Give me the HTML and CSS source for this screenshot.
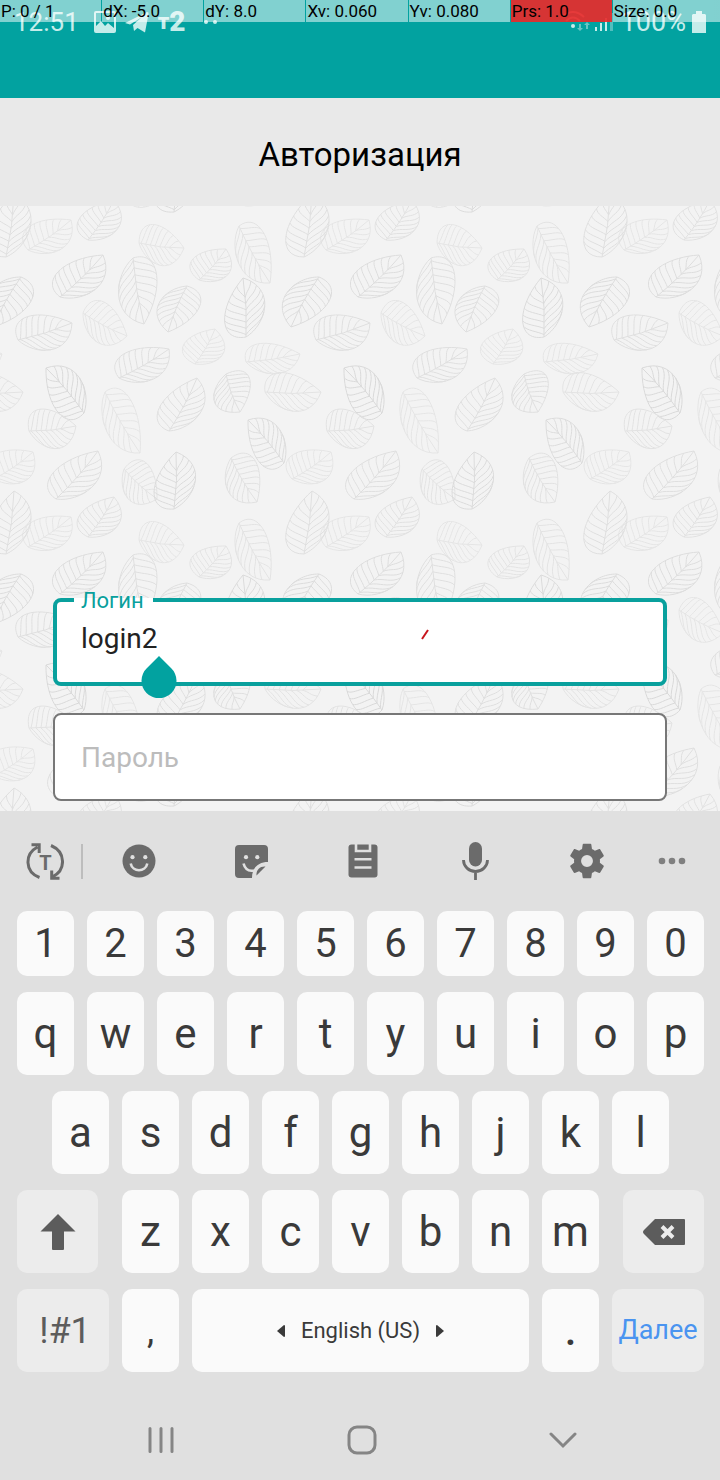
FILE: index.html
```html
<!DOCTYPE html>
<html lang="ru">
<head>
<meta charset="utf-8">
<meta name="viewport" content="width=device-width, initial-scale=1">
<title>Авторизация</title>
<link rel="stylesheet" href="styles.css">
</head>
<body>
<div class="pointer-bar">
  <span>P: 0 / 1</span><span>dX: -5.0</span><span>dY: 8.0</span><span>Xv: 0.060</span><span>Yv: 0.080</span><span class="pressed">Prs: 1.0</span><span>Size: 0.0</span>
</div>
<div class="status-bar">
  <div class="status-group">
    <span class="clock">12:51</span>
    <svg class="st-picture" width="22" height="22" viewBox="0 0 22 22"><path fill-rule="evenodd" d="M2 0H20a2 2 0 0 1 2 2V20a2 2 0 0 1-2 2H2a2 2 0 0 1-2-2V2a2 2 0 0 1 2-2ZM2 2V15L7 10L11 15L14 12L20 17V2ZM14 5a2 2 0 1 1 0 4a2 2 0 0 1 0-4Z"/></svg>
    <svg width="24" height="21" viewBox="0 0 24 21"><path d="M0 11L22 0Q24 0 23.500 2L20 20.500L12.500 16L9 19L8 13L17 5L5 12.500Z"/></svg>
    <span class="carrier"><span>т</span><b>2</b></span>
    <svg class="st-dots" width="16" height="6" viewBox="0 0 16 6"><circle cx="3" cy="3" r="2"/><circle cx="12" cy="3" r="2"/></svg>
  </div>
  <div class="status-group end">
    <svg class="st-signal" width="51" height="22" viewBox="0 0 51 22"><g fill="none" stroke="currentColor" stroke-width="2"><path d="M0 6Q11-4 22 6M4 10Q11 3 18 10"/></g><circle cx="11" cy="15" r="2"/><path opacity=".5" d="M17 13h2v4h2l-3 3-3-3h2zM24 18h2v-4h2l-3-3-3 3h2z"/><path d="M33 16h2v4h-2zM38 12h2v8h-2zM43 7h2v13h-2z"/><path opacity=".4" d="M48 2h3v18h-3z"/></svg>
    <span class="battery-text">100%</span>
    <svg width="14" height="22" viewBox="0 0 14 22"><path d="M4 0h6v3h3l1 1v18H0V4l1-1h3z"/></svg>
  </div>
</div>
<header class="title-bar"><h1>Авторизация</h1></header>
<main class="content">
  <svg class="leaves" width="100%" height="100%" aria-hidden="true">
    <defs>
      <pattern id="leaf-tile" width="298" height="297" patternUnits="userSpaceOnUse"></pattern>
    </defs>
    <rect width="100%" height="100%" fill="url(#leaf-tile)"/>
  </svg>
  <form class="login-form">
    <div class="field active">
      <label for="login">Логин</label>
      <input id="login" type="text" value="login2">
      <svg class="caret-handle" width="36" height="42" viewBox="0 0 36 42"><path d="M18 0L30 12A17.500 17.500 0 1 1 6 12Z"/></svg>
      <svg class="trail" width="8" height="11" viewBox="0 0 8 11"><path d="M1 10L7 1"/></svg>
    </div>
    <div class="field">
      <input id="password" type="password" placeholder="Пароль" aria-label="Пароль">
    </div>
  </form>
</main>
<section class="keyboard" aria-label="Клавиатура">
  <div class="tools">
    <button type="button" class="split" aria-label="Text"><svg width="38" height="38" viewBox="0 0 38 38"><g fill="none" stroke="currentColor" stroke-width="3"><path d="M13.500 35.500C-1.500 30-1.500 12 11.500 5M5.500 2.700H13.200V11M25 3.500C40 10 40 28 27 34.500M33.500 36.200H25.700V28.500"/></g><text x="19.500" y="28" text-anchor="middle">T</text></svg></button>
    <button type="button" aria-label="Emoji"><svg width="34" height="34" viewBox="0 0 34 34"><circle cx="17" cy="17" r="16.500"/><g class="cut"><circle cx="10.500" cy="13.200" r="2.100"/><circle cx="23.300" cy="13.200" r="2.100"/></g><path class="cut-line" d="M8.700 19.500C10.500 28.500 23.500 28.500 25.300 19.500"/></svg></button>
    <button type="button" aria-label="Stickers"><svg width="33" height="33" viewBox="0 0 33 33"><path d="M4 0H29a4 4 0 0 1 4 4V17C23 17 17 23 17 33H4a4 4 0 0 1-4-4V4a4 4 0 0 1 4-4ZM30.500 21.500L21.500 30.500C21 25 25 21 30.500 21.500Z"/><g class="cut"><circle cx="11" cy="12.200" r="2.100"/><circle cx="22.300" cy="12.200" r="2.100"/></g><path class="cut-line" d="M8.500 18.500C10 24 14 26.500 19 25.500"/></svg></button>
    <button type="button" aria-label="Clipboard"><svg width="30" height="34" viewBox="0 0 30 34"><rect width="29" height="33" x=".5" y=".5" rx="3"/><path class="cut-line" d="M8 0V7H22V0M6.500 15.200H23.500M6.500 23.500H23.500"/></svg></button>
    <button type="button" aria-label="Voice"><svg width="29" height="40" viewBox="0 0 29 40"><rect x="8" y="1" width="13" height="24.500" rx="6.500"/><path fill="none" stroke="currentColor" stroke-width="2.800" d="M2.500 19A12 11.500 0 0 0 26.500 19M14.500 30V39"/></svg></button>
    <button type="button" aria-label="Settings"><svg width="36" height="36" viewBox="2 2 20 20"><path d="M19.140 12.940c.04-.3.060-.61.060-.94 0-.32-.02-.64-.07-.94l2.030-1.580c.18-.14.230-.41.120-.61l-1.920-3.320c-.12-.22-.37-.29-.59-.22l-2.390.96c-.5-.38-1.030-.7-1.620-.94l-.36-2.540c-.04-.24-.24-.41-.48-.41h-3.840c-.24 0-.43.170-.47.410l-.36 2.540c-.59.240-1.130.570-1.620.940l-2.390-.96c-.22-.08-.47 0-.59.220L2.740 8.870c-.12.210-.08.470.120.610l2.030 1.580c-.05.300-.09.630-.09.940s.02.640.070.940l-2.030 1.580c-.18.140-.23.410-.12.610l1.920 3.320c.12.220.370.290.590.220l2.390-.96c.5.380 1.030.7 1.620.940l.36 2.540c.05.240.240.410.480.410h3.840c.24 0 .44-.17.470-.41l.36-2.540c.59-.24 1.130-.56 1.620-.94l2.390.960c.22.080.470 0 .590-.22l1.920-3.320c.12-.22.070-.47-.12-.61l-2.010-1.580zM12 15.300a3.300 3.300 0 1 1 0-6.600a3.300 3.300 0 0 1 0 6.600z"/></svg></button>
    <button type="button" class="more" aria-label="More"><svg width="28" height="8" viewBox="0 0 28 8"><circle cx="4" cy="4" r="3.300"/><circle cx="14" cy="4" r="3.300"/><circle cx="24" cy="4" r="3.300"/></svg></button>
  </div>
  <div class="keys">
    <div class="row digits"><button type="button">1</button><button type="button">2</button><button type="button">3</button><button type="button">4</button><button type="button">5</button><button type="button">6</button><button type="button">7</button><button type="button">8</button><button type="button">9</button><button type="button">0</button></div>
    <div class="row"><button type="button">q</button><button type="button">w</button><button type="button">e</button><button type="button">r</button><button type="button">t</button><button type="button">y</button><button type="button">u</button><button type="button">i</button><button type="button">o</button><button type="button">p</button></div>
    <div class="row inset"><button type="button">a</button><button type="button">s</button><button type="button">d</button><button type="button">f</button><button type="button">g</button><button type="button">h</button><button type="button">j</button><button type="button">k</button><button type="button">l</button></div>
    <div class="row"><button type="button" class="fn shift" aria-label="Shift"><svg width="36" height="36" viewBox="0 0 36 36"><path d="M18 0L35.500 17.500H24V35a1 1 0 0 1-1 1H13a1 1 0 0 1-1-1V17.500H.5Z"/></svg></button><button type="button">z</button><button type="button">x</button><button type="button">c</button><button type="button">v</button><button type="button">b</button><button type="button">n</button><button type="button">m</button><button type="button" class="fn erase" aria-label="Backspace"><svg width="42" height="26" viewBox="0 0 42 26"><path d="M12 0H41a1 1 0 0 1 1 1V25a1 1 0 0 1-1 1H12L1 15Q-1 13 1 11Z"/><path stroke="#ececec" stroke-width="4" d="M19 7.500L30 18.500M30 7.500L19 18.500"/></svg></button></div>
    <div class="row"><button type="button" class="fn wide symbols">!#1</button><button type="button" class="comma">,</button><button type="button" class="space"><svg width="8" height="12" viewBox="0 0 8 12"><path d="M8 1V11Q8 12 7 12L0 6L7 0Q8 0 8 1Z"/></svg>English (US)<svg width="8" height="12" viewBox="0 0 8 12"><path d="M0 1V11Q0 12 1 12L8 6L1 0Q0 0 0 1Z"/></svg></button><button type="button" class="dot">.</button><button type="button" class="fn wide next">Далее</button></div>
  </div>
  <nav class="system-nav">
    <button type="button" aria-label="Recents"><svg width="28" height="28" viewBox="0 0 28 28"><path d="M3 2.500V25.500M14 2.500V25.500M25 2.500V25.500"/></svg></button>
    <button type="button" aria-label="Home"><svg width="30" height="30" viewBox="0 0 30 30"><rect x="2" y="2" width="26" height="26" rx="8"/></svg></button>
    <button type="button" aria-label="Hide keyboard"><svg width="28" height="18" viewBox="0 0 28 18"><path d="M2 3L14 15L26 3"/></svg></button>
  </nav>
</section>
<script src="leaves.js"></script>
</body>
</html>
```
FILE: styles.css
```css
* { box-sizing: border-box; }
body {
  margin: 0;
  min-height: 100vh;
  display: flex;
  flex-direction: column;
  position: relative;
  background: #f3f3f3;
  font-family: Roboto, "Noto Sans", sans-serif;
  color: #222;
}
button {
  border: 0;
  padding: 0;
  margin: 0;
  background: none;
  color: inherit;
  font: inherit;
}
svg { fill: currentColor; flex: none; }

.pointer-bar {
  position: absolute;
  top: 0;
  left: 0;
  right: 0;
  z-index: 2;
  display: flex;
  gap: 1px;
  padding-right: 6px;
  background: linear-gradient(rgba(255, 255, 255, .5), rgba(255, 255, 255, .5)) right / 6px 100% no-repeat;
  font-size: 17px;
  line-height: 22px;
  color: #000;
}
.pointer-bar span {
  flex: 1 1 0;
  padding-left: 1px;
  white-space: nowrap;
  background: rgba(255, 255, 255, .5);
}
.pointer-bar .pressed { background: rgba(232, 42, 42, .92); }

.status-bar {
  display: flex;
  justify-content: space-between;
  align-items: flex-start;
  height: 98px;
  padding: 10px 14px 0;
  background: #02a2a0;
  color: #c5ecea;
  font-size: 26px;
  line-height: 24px;
}
.status-group { display: flex; align-items: center; gap: 9px; }
.status-group.end { gap: 6px; }
.st-picture { margin-left: 6px; }
.st-signal { margin-right: 2px; }
.battery-text { font-size: 27px; }
.carrier { display: flex; font-weight: 900; }
.carrier b { font-weight: 900; font-size: 28px; }
.carrier span { font-size: 22px; }
.st-dots { margin-left: 8px; }

.title-bar {
  display: flex;
  align-items: center;
  justify-content: center;
  height: 108px;
  padding-top: 4px;
  background: #e9e9e9;
}
.title-bar h1 {
  margin: 0;
  font-size: 33px;
  font-weight: 400;
  color: #000;
}

.content {
  position: relative;
  flex: 1;
  display: flex;
  flex-direction: column;
  justify-content: flex-end;
  overflow: hidden;
}
.leaves { position: absolute; inset: 0; fill: none; }
.leaves .leaf { fill: none; stroke-width: 1px; }

.login-form {
  position: relative;
  display: flex;
  flex-direction: column;
  gap: 27px;
  padding: 40px 53px 10px;
}
.field { position: relative; }
.field input {
  display: block;
  width: 100%;
  height: 88px;
  padding: 0 26px;
  border: 2px solid #777;
  border-radius: 8px;
  outline: 0;
  background: #fff;
  font: 28px Roboto, "Noto Sans", sans-serif;
  color: #222;
}
.field input::placeholder { color: #bcbcbc; opacity: 1; }
.field.active input { border: 4px solid #09a09d; padding: 0 24px 8px; }
.field label {
  position: absolute;
  left: 21px;
  top: -10px;
  padding: 0 9px 0 7px;
  font-size: 22px;
  line-height: 26px;
  color: #09a09d;
  background: linear-gradient(transparent 10px, #fff 10px);
}
.caret-handle { position: absolute; left: 88px; top: 58px; color: #02a2a0; }
.trail { position: absolute; left: 60%; top: 31px; fill: none; stroke: #c8141c; stroke-width: 2px; }

.keyboard { background: #e0e0e0; color: #3a3a3a; }
.tools {
  display: grid;
  grid-template-columns: 83fr repeat(5, 112fr) 57fr;
  height: 100px;
  padding-right: 20px;
  color: #6b6b6b;
}
.tools button { display: flex; align-items: center; justify-content: center; }
.tools .split {
  padding-left: 7px;
  background: linear-gradient(#bdbdbd, #bdbdbd) right center / 2px 35px no-repeat;
}
.tools text { font: 700 20px Roboto, sans-serif; }
.tools .more { color: #808080; }
.cut { fill: #e0e0e0; }
.cut-line { fill: none; stroke: #e0e0e0; stroke-width: 2.6px; }

.keys {
  display: flex;
  flex-direction: column;
  gap: 16px;
  padding: 0 16px 28px 17px;
}
.row { display: flex; gap: 13px; }
.row.inset { padding: 0 35px; }
.row button {
  flex: 57 1 0;
  display: flex;
  align-items: center;
  justify-content: center;
  height: 83px;
  border-radius: 10px;
  background: #fafafa;
  font-size: 42px;
  line-height: 1;
}
.row.digits button { height: 65px; font-size: 40px; }
.row .fn { background: #ececec; color: #5c5c5c; }
.row .shift { flex-grow: 81; margin-right: 11px; }
.row .erase { flex-grow: 81; margin-left: 11px; }
.row .wide { flex-grow: 92; }
.row .space { flex-grow: 337; gap: 16px; font-size: 22px; }
.row .symbols { font-size: 36px; text-indent: 4px; }
.row .comma { font-size: 36px; }
.row .dot { font-weight: 500; }
.row .next { color: #4a94f0; font-size: 27px; }

.system-nav {
  display: grid;
  grid-template-columns: repeat(3, 1fr);
  height: 80px;
  padding: 0 56px 0 60px;
}
.system-nav button { display: flex; align-items: center; justify-content: center; }
.system-nav svg {
  fill: none;
  stroke: #858585;
  stroke-width: 3px;
  stroke-linecap: round;
}
```
FILE: leaves.js
```js
// Each leaf: base x, base y, tip x, tip y, breadth, line colour.
const TILE_W = 298, TILE_H = 297;
const leaves = [
  [28, 44, 71, 14, 34, '#e5e5e5'], [88, 34, 114, -6, 35, '#e1e1e1'],
  [139, 37, 184, 42, 37, '#e5e5e5'], [199, 74, 226, 43, 34, '#e3e3e3'],
  [239, 20, 270, 77, 34, '#e3e3e3'], [6, 51, 14, -12, 38, '#dfdfdf'],
  [60, 91, 103, 49, 36, '#dddddd'], [133, 52, 144, 118, 38, '#dfdfdf'],
  [187, 80, 168, 126, 36, '#dfdfdf'], [246, 131, 243, 72, 38, '#dbdbdb'],
  [319, 71, 291, 121, 38, '#dcdcdc'], [18, 134, 72, 117, 36, '#dfdfdf'],
  [83, 107, 127, 130, 36, '#e5e5e5'], [195, 158, 215, 123, 36, '#e5e5e5'],
  [246, 156, 300, 148, 30, '#e5e5e5'], [119, 172, 169, 143, 34, '#dfdfdf'],
  [84, 207, 46, 162, 36, '#d9d9d9'], [265, 186, 321, 186, 36, '#e3e3e3'],
  [105, 186, 140, 247, 34, '#e5e5e5'], [169, 225, 197, 172, 36, '#dfdfdf'],
  [226, 168, 240, 206, 38, '#dfdfdf'], [29, 225, 76, 220, 38, '#e2e2e2'],
  [284, 257, 248, 214, 34, '#dcdcdc'], [-6, 273, 33, 246, 36, '#e5e5e5'],
  [56, 293, 98, 245, 36, '#dfdfdf'], [124, 263, 157, 293, 36, '#e3e3e3'],
  [174, 303, 176, 246, 38, '#dbdbdb'], [231, 252, 257, 296, 36, '#e1e1e1']
];

// Edge curves: one side is full near the base, the other near the tip.
const edges = [
  { side: -1, x1: -.06, y1: .72, x2: .5, y2: .72 },
  { side: 1, x1: .2, y1: .56, x2: .8, y2: .86 }
];

function outline(point) {
  let d = 'M' + point(0, 0) + 'Q' + point(.5, .08) + ' ' + point(1, 0);
  for (const { side, x1, y1, x2, y2 } of edges) {
    d += 'M' + point(0, 0) + 'C' + point(x1, side * y1) + ' ' + point(x2, side * y2) + ' ' + point(1, 0);
    for (let i = 0; i < 7; i++) {
      // A vein leaves the midrib at t and meets the edge curve at u.
      const t = .04 + i * .105;
      const u = .42 + i * .082;
      const a = 1 - u;
      const x = 3 * a * a * u * x1 + 3 * a * u * u * x2 + u * u * u;
      const y = 3 * a * a * u * y1 + 3 * a * u * u * y2;
      const rib = .16 * t * (1 - t);
      d += 'M' + point(t, rib) + 'C' + point(t + (x - t) * .4, side * y * .35) +
        ' ' + point(t + (x - t) * .5, side * y * .85) + ' ' + point(x, side * y);
    }
  }
  return d;
}

const tile = document.getElementById('leaf-tile');
for (const [ax, ay, bx, by, breadth, colour] of leaves) {
  const dx = bx - ax, dy = by - ay, len = Math.hypot(dx, dy);
  for (const ox of [-TILE_W, 0, TILE_W]) {
    for (const oy of [-TILE_H, 0, TILE_H]) {
      const point = (u, v) => {
        const x = ax + ox + dx * u - dy / len * v * breadth;
        const y = ay + oy + dy * u + dx / len * v * breadth;
        return x.toFixed(1) + ' ' + y.toFixed(1);
      };
      const path = document.createElementNS('http://www.w3.org/2000/svg', 'path');
      path.setAttribute('class', 'leaf');
      path.setAttribute('stroke', colour);
      path.setAttribute('d', outline(point));
      tile.appendChild(path);
    }
  }
}
```
